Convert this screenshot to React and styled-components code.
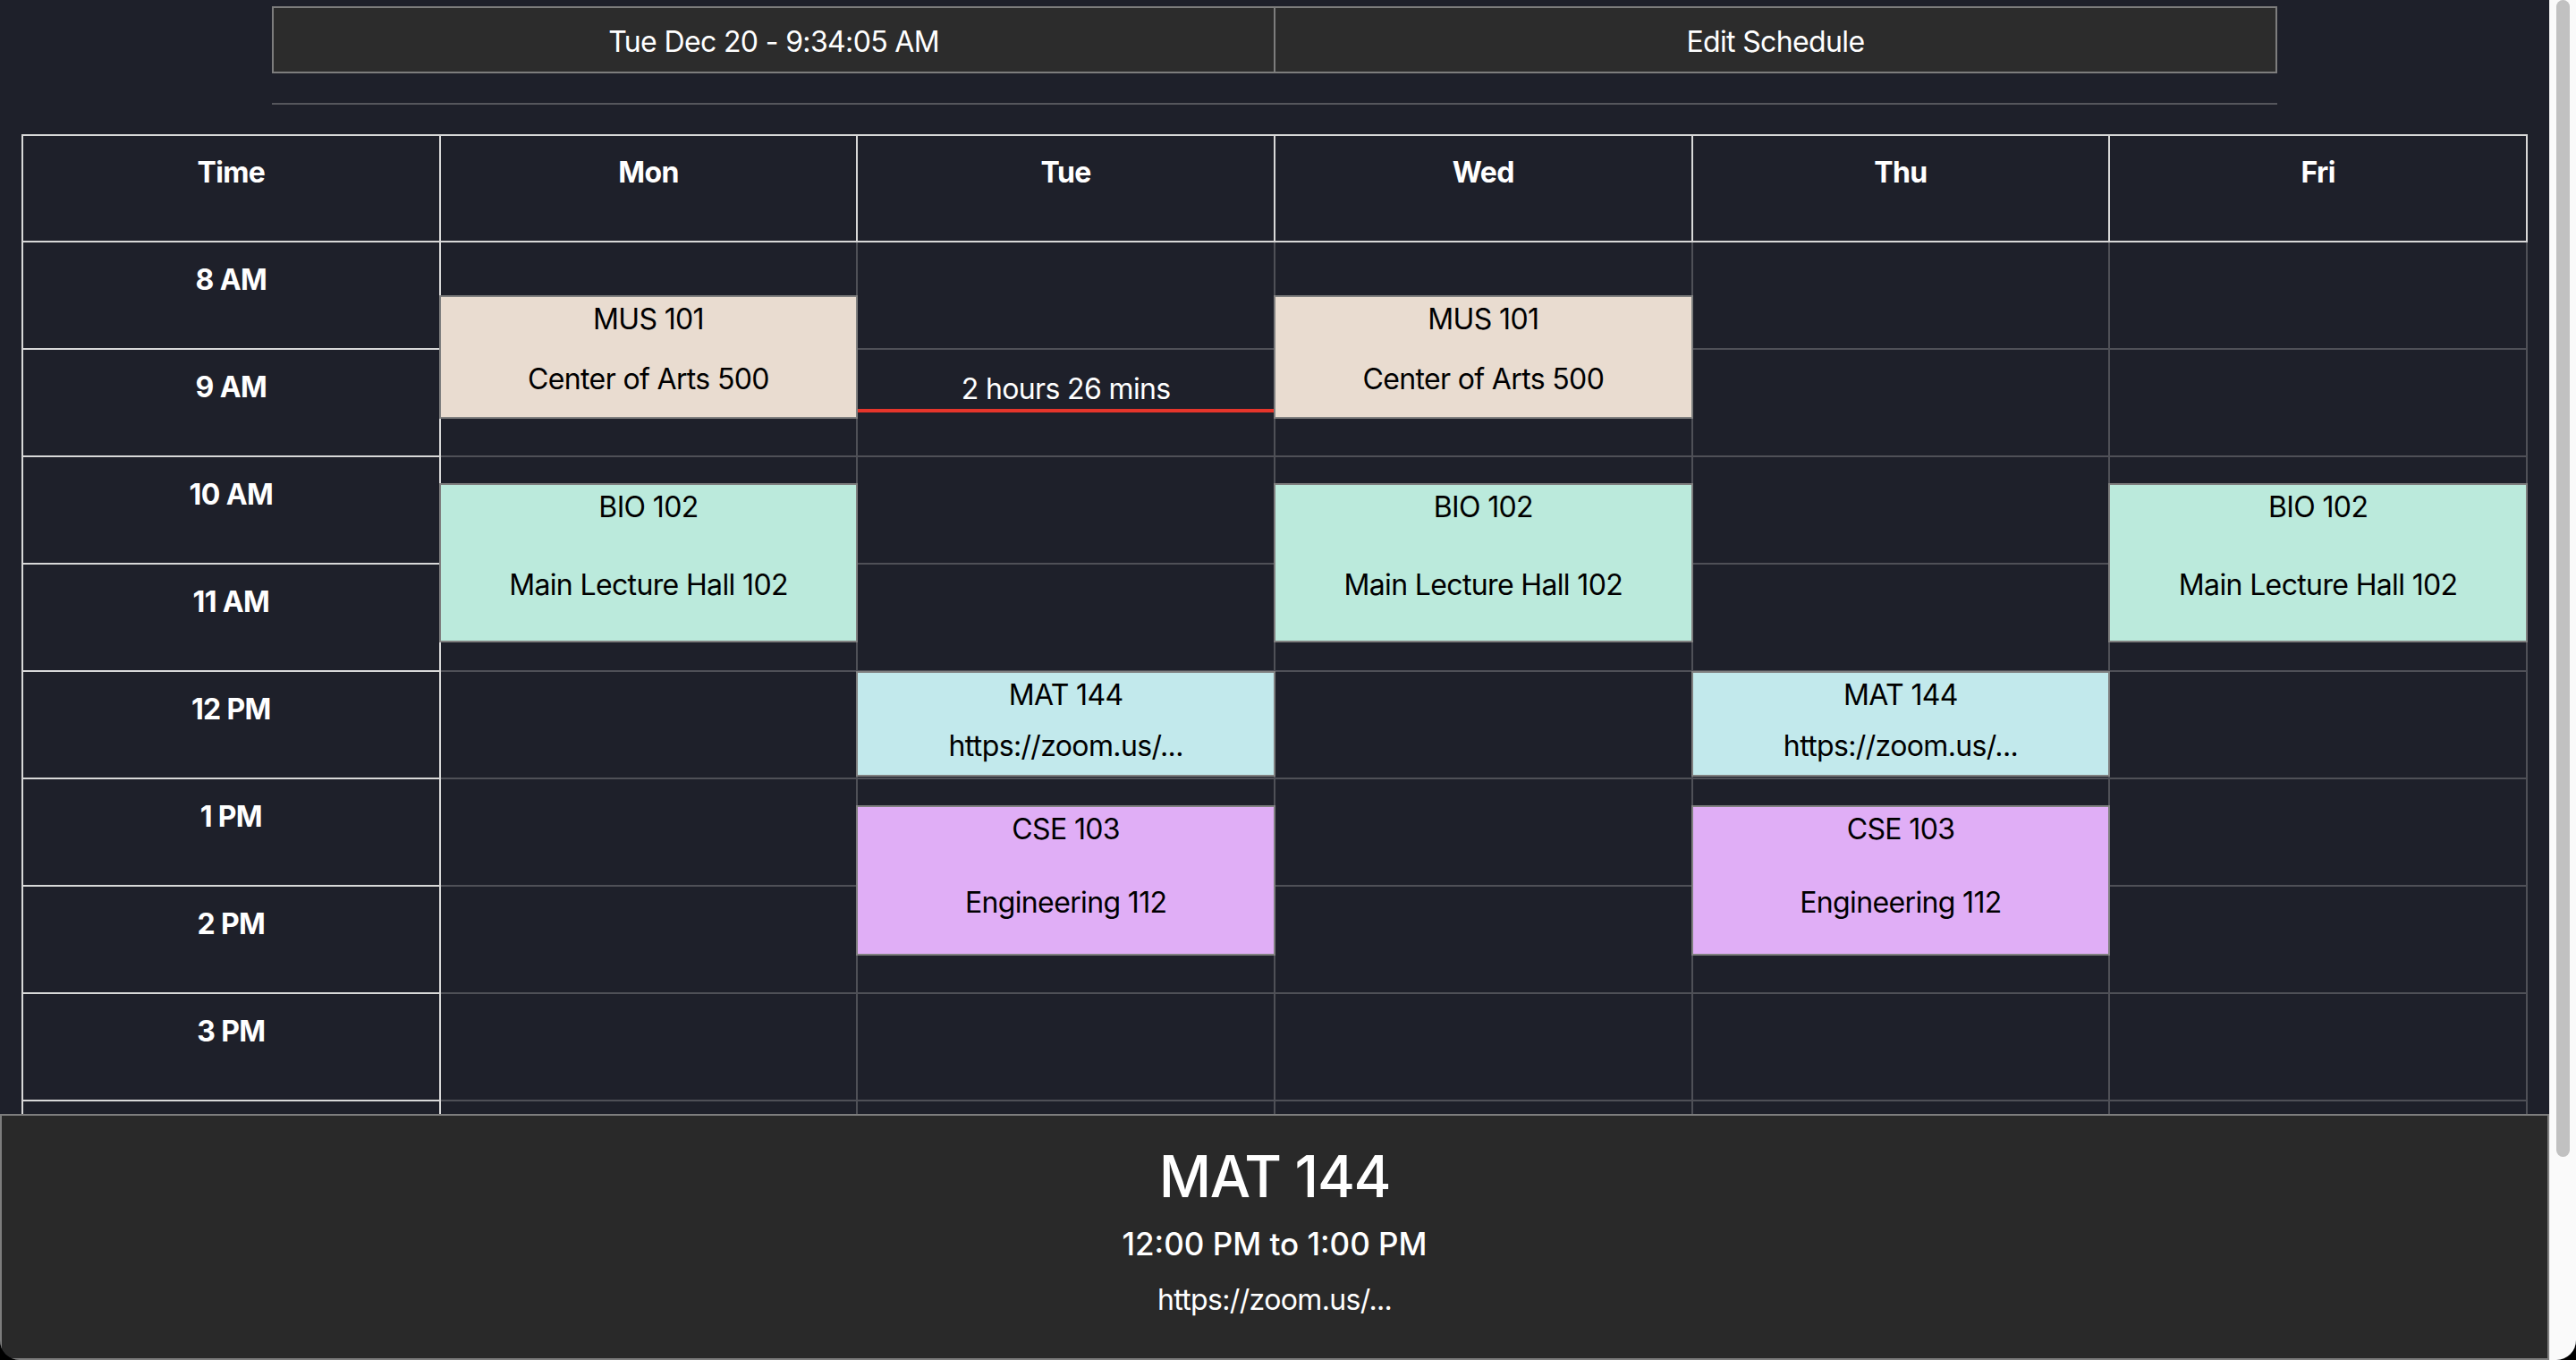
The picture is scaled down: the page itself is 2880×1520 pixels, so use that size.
import React from "react";
import styled, { createGlobalStyle } from "styled-components";

const GlobalStyle = createGlobalStyle`
  html, body { margin: 0; padding: 0; background: #000; }
  body { font-family: Inter, "Liberation Sans", sans-serif; overflow: hidden; }
  *, *::before, *::after { box-sizing: border-box; }
`;

const LIGHT = "#d8d8d8";
const GRID = "#4f5057";
const FONT = `Inter, "Liberation Sans", sans-serif`;
const TRACK = "-0.02em";

const Frame = styled.div`
  display: flex;
  width: 2880px;
  height: 1520px;
  overflow: hidden;
  border-radius: 0 0 22px 22px;
  background: #1e202a;
`;

const Main = styled.div`
  flex: 1;
  min-width: 0;
  height: 100%;
  display: flex;
  flex-direction: column;
`;

const ScrollArea = styled.div`
  flex: 1;
  min-height: 0;
  overflow: hidden;
  padding: 7px 24px 0;
`;

const TopBar = styled.div`
  width: 80%;
  height: 75px;
  margin: 0 auto;
  display: flex;
  border: 2px solid #7d7d7d;
  background: #2c2c2c;
`;

const BarButton = styled.button`
  flex: 1;
  margin: 0;
  padding: 4px 0 0;
  border: none;
  background: transparent;
  color: #fff;
  font: 400 32px/38px ${FONT};
  letter-spacing: ${TRACK};
  & + & {
    border-left: 2px solid #7d7d7d;
  }
`;

const Rule = styled.hr`
  width: 80%;
  height: 2px;
  margin: 33px auto 33px;
  border: none;
  background: #55565c;
`;

const Schedule = styled.div`
  border-top: 2px solid ${LIGHT};
  border-left: 2px solid ${LIGHT};
`;

const Columns = styled.div`
  display: grid;
  grid-template-columns: repeat(6, 1fr);
`;

const HeadCell = styled.div`
  height: 119px;
  padding-top: 22px;
  border-right: 2px solid ${LIGHT};
  border-bottom: 2px solid ${LIGHT};
  color: #fff;
  text-align: center;
  font: 700 32px/38px ${FONT};
  letter-spacing: ${TRACK};
`;

const TimeColumn = styled.div`
  display: flex;
  flex-direction: column;
`;

const TimeCell = styled.div`
  height: 120px;
  flex: none;
  padding-top: 23px;
  border-right: 2px solid ${LIGHT};
  border-bottom: 2px solid ${LIGHT};
  color: #fff;
  text-align: center;
  font: 700 32px/38px ${FONT};
  letter-spacing: ${TRACK};
`;

const DayColumn = styled.div`
  position: relative;
  display: flex;
  flex-direction: column;
`;

const SlotCell = styled.div`
  height: 120px;
  flex: none;
  border-right: 2px solid ${GRID};
  border-bottom: 2px solid ${GRID};
`;

const EventCard = styled.div`
  position: absolute;
  left: -2px;
  right: 0;
  display: flex;
  flex-direction: column;
  border: 2px solid #7f7f7f;
  background: ${(p) => p.$bg};
  color: #000;
  text-align: center;
  font: 400 32px/38px ${FONT};
  letter-spacing: ${TRACK};
  z-index: 1;
`;

const EventTitle = styled.div`
  height: 46px;
  padding-top: 6px;
  flex: none;
`;

const EventPlace = styled.div`
  flex: 1;
  display: flex;
  align-items: center;
  justify-content: center;
  padding-top: 4px;
`;

const NowLine = styled.div`
  position: absolute;
  left: 0;
  right: 2px;
  height: 4px;
  background: #e6352b;
  z-index: 2;
`;

const NowLabel = styled.div`
  position: absolute;
  left: 0;
  right: 0;
  bottom: calc(100% + 3px);
  color: #fff;
  text-align: center;
  font: 400 32px/38px ${FONT};
  letter-spacing: ${TRACK};
  white-space: nowrap;
`;

const DetailPanel = styled.div`
  flex: none;
  height: 275px;
  display: flex;
  flex-direction: column;
  align-items: center;
  padding-top: 29px;
  background: #292929;
  border: 2px solid #7d7d7d;
  color: #fff;
`;

const DetailTitle = styled.h1`
  margin: 0;
  font: 500 64px/78px ${FONT};
  letter-spacing: ${TRACK};
`;

const DetailTime = styled.h3`
  margin: 15px 0 0;
  font: 500 35px/42px ${FONT};
  letter-spacing: 0;
`;

const DetailPlace = styled.p`
  margin: 23px 0 0;
  font: 400 32px/38px ${FONT};
  letter-spacing: ${TRACK};
`;

const ScrollTrack = styled.div`
  flex: none;
  width: 30px;
  height: 100%;
  padding: 0 7px 0 7px;
  background: #fafafa;
  border-left: 1px solid #ececec;
`;

const ScrollThumb = styled.div`
  height: 1293px;
  border-radius: 8px;
  background: #c1c1c1;
`;

const DAYS = ["Mon", "Tue", "Wed", "Thu", "Fri"];
const HOURS = ["8 AM", "9 AM", "10 AM", "11 AM", "12 PM", "1 PM", "2 PM", "3 PM", "4 PM"];

const COURSES = {
  MUS: { title: "MUS 101", place: "Center of Arts 500", bg: "#e9dcd0", start: [8, 30], end: [9, 40] },
  BIO: { title: "BIO 102", place: "Main Lecture Hall 102", bg: "#bbeadc", start: [10, 15], end: [11, 45] },
  MAT: { title: "MAT 144", place: "https://zoom.us/...", bg: "#c2e9ec", start: [12, 0], end: [13, 0] },
  CSE: { title: "CSE 103", place: "Engineering 112", bg: "#e0aef6", start: [13, 15], end: [14, 40] },
};

const SCHEDULE = {
  Mon: ["MUS", "BIO"],
  Tue: ["MAT", "CSE"],
  Wed: ["MUS", "BIO"],
  Thu: ["MAT", "CSE"],
  Fri: ["BIO"],
};

const PX_PER_MIN = 2;
const DAY_START = 8 * 60;
const toMin = ([h, m]) => h * 60 + m;
const NOW = [9, 34];

function Event({ course }) {
  const top = (toMin(course.start) - DAY_START) * PX_PER_MIN - 1;
  const height = (toMin(course.end) - toMin(course.start)) * PX_PER_MIN - 2;
  return (
    <EventCard $bg={course.bg} style={{ top, height }}>
      <EventTitle>{course.title}</EventTitle>
      <EventPlace>{course.place}</EventPlace>
    </EventCard>
  );
}

export default function App() {
  const nowTop = (toMin(NOW) - DAY_START) * PX_PER_MIN - 2;
  return (
    <>
      <GlobalStyle />
      <Frame>
        <Main>
          <ScrollArea>
            <TopBar>
              <BarButton>Tue Dec 20 - 9:34:05 AM</BarButton>
              <BarButton>Edit Schedule</BarButton>
            </TopBar>
            <Rule />
            <Schedule>
              <Columns>
                <HeadCell>Time</HeadCell>
                {DAYS.map((d) => (
                  <HeadCell key={d}>{d}</HeadCell>
                ))}
              </Columns>
              <Columns>
                <TimeColumn>
                  {HOURS.map((h) => (
                    <TimeCell key={h}>{h}</TimeCell>
                  ))}
                </TimeColumn>
                {DAYS.map((d) => (
                  <DayColumn key={d}>
                    {HOURS.map((h) => (
                      <SlotCell key={h} />
                    ))}
                    {SCHEDULE[d].map((k) => (
                      <Event key={k} course={COURSES[k]} />
                    ))}
                    {d === "Tue" && (
                      <NowLine style={{ top: nowTop }}>
                        <NowLabel>2 hours 26 mins</NowLabel>
                      </NowLine>
                    )}
                  </DayColumn>
                ))}
              </Columns>
            </Schedule>
          </ScrollArea>
          <DetailPanel>
            <DetailTitle>MAT 144</DetailTitle>
            <DetailTime>12:00 PM to 1:00 PM</DetailTime>
            <DetailPlace>https://zoom.us/...</DetailPlace>
          </DetailPanel>
        </Main>
        <ScrollTrack>
          <ScrollThumb />
        </ScrollTrack>
      </Frame>
    </>
  );
}
